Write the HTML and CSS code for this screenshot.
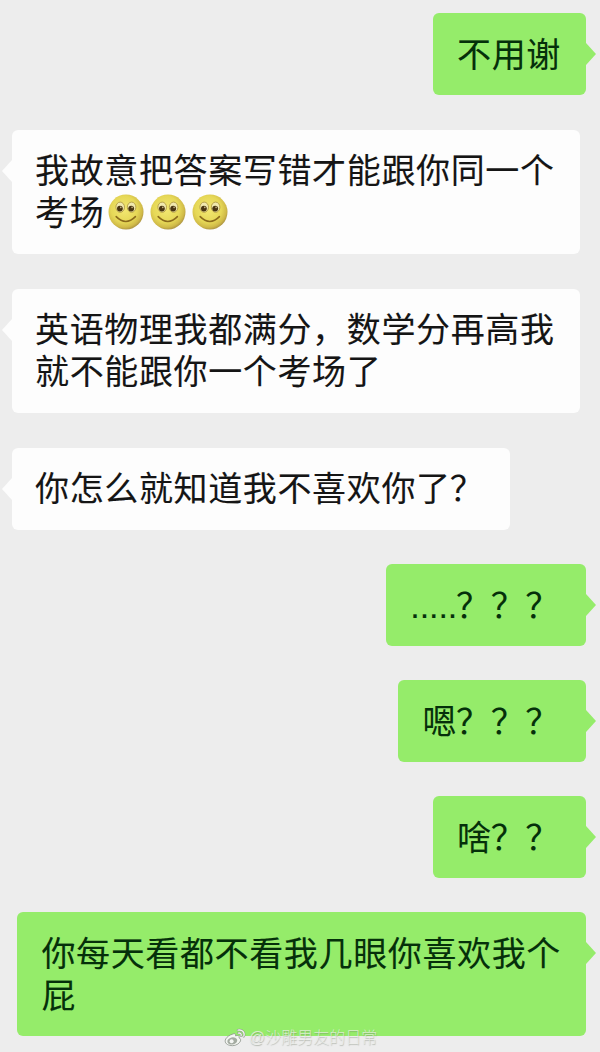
FILE: index.html
```html
<!DOCTYPE html>
<html lang="zh-CN">
<head>
<meta charset="utf-8">
<title>聊天</title>
<link rel="stylesheet" href="styles.css">
</head>
<body>
<svg class="defs" width="0" height="0" aria-hidden="true">
  <defs>
    <radialGradient id="face" cx="45%" cy="42%" r="60%">
      <stop offset="0" stop-color="#f3e873"/>
      <stop offset="0.62" stop-color="#e6d857"/>
      <stop offset="0.86" stop-color="#d0ba48"/>
      <stop offset="1" stop-color="#a88f42"/>
    </radialGradient>
    <symbol id="smile" viewBox="0 0 36 36">
      <circle cx="18" cy="18" r="17.5" fill="url(#face)"/>
      <ellipse cx="12.2" cy="13.2" rx="4.3" ry="5.1" fill="#f1e9ae" stroke="#b09a40" stroke-width="0.9"/>
      <ellipse cx="23.6" cy="13.2" rx="4.3" ry="5.1" fill="#f1e9ae" stroke="#b09a40" stroke-width="0.9"/>
      <circle cx="11.9" cy="14.6" r="2.9" fill="#493512"/>
      <circle cx="23.2" cy="14.6" r="2.9" fill="#493512"/>
      <circle cx="12.8" cy="13.4" r="0.8" fill="#c9b98a"/>
      <circle cx="24.1" cy="13.4" r="0.8" fill="#c9b98a"/>
      <path d="M8.2 22.6Q17.8 32.4 27.4 22.6" fill="none" stroke="#8a6a1c" stroke-width="1.6" stroke-linecap="round"/>
    </symbol>
  </defs>
</svg>
<main class="chat">
  <div class="bubble sent">不用谢</div>
  <div class="bubble received">我故意把答案写错才能跟你同一个<br>考场<span class="faces"><svg class="face"><use href="#smile"/></svg><svg class="face"><use href="#smile"/></svg><svg class="face"><use href="#smile"/></svg></span></div>
  <div class="bubble received">英语物理我都满分，数学分再高我<br>就不能跟你一个考场了</div>
  <div class="bubble received">你怎么就知道我不喜欢你了<span class="mark">？</span></div>
  <div class="bubble sent"><span class="dots">.....</span><span class="mark">？？？</span></div>
  <div class="bubble sent">嗯<span class="mark">？？？</span></div>
  <div class="bubble sent">啥<span class="mark">？？</span></div>
  <div class="bubble sent">你每天看都不看我几眼你喜欢我个<br>屁</div>
  <div class="watermark">
    <svg class="weibo" viewBox="0 0 22 20">
      <path d="M8.5 6.2C10.6 5 12 5.7 11.5 7.8C14 7 15.8 7.7 15 9.8C17 10.6 17.1 12.5 15.8 14.2C13.8 17 9.5 18.3 5.8 17.4C2 16.5.2 14 1.7 11C3 8.7 5.6 7 8.5 6.2Z" fill="#f4f6f2" stroke="#8c938a" stroke-width=".8"/>
      <ellipse cx="8.3" cy="12.9" rx="5" ry="3.6" transform="rotate(-12 8.3 12.9)" fill="#a5aca2"/>
      <circle cx="7.6" cy="13.3" r="2" fill="#f5f6f4"/>
      <path d="M14 2.2C18.2 1.2 21.2 4.5 19.8 8.3M14.4 5.1C16.4 4.7 17.7 6.1 17.1 7.9" fill="none" stroke="#8c938a" stroke-width="2.3" stroke-linecap="round"/>
      <path d="M14 2.2C18.2 1.2 21.2 4.5 19.8 8.3M14.4 5.1C16.4 4.7 17.7 6.1 17.1 7.9" fill="none" stroke="#f4f6f2" stroke-width="1.3" stroke-linecap="round"/>
    </svg>
    <span>@沙雕男友的日常</span>
  </div>
</main>
</body>
</html>
```
FILE: styles.css
```css
body {
  margin: 0;
  background: #ededed;
  font-family: "Liberation Sans", "Noto Sans CJK SC", sans-serif;
}

.defs {
  position: absolute;
}

.chat {
  position: relative;
  box-sizing: border-box;
  height: 1052px;
  padding: 13px 14px 0 12px;
  display: flex;
  flex-direction: column;
  align-items: flex-start;
  gap: 34px;
  overflow: hidden;
}

.bubble {
  position: relative;
  padding: 20px 25px 20px 23px;
  border-radius: 6px;
  font-size: 34px;
  line-height: 42px;
  letter-spacing: 0.64px;
  white-space: nowrap;
  -webkit-text-stroke: 0.1px currentColor;
}

.sent {
  align-self: flex-end;
  padding: 21px 25px 19px 24px;
  background: #95ec6a;
  color: #05300a;
}

.received {
  margin-top: 1px;
  background: #fdfdfd;
  color: #151515;
}

.bubble::after {
  content: "";
  position: absolute;
  top: 30px;
  width: 10px;
  height: 22px;
}

.sent::after {
  left: 100%;
  background: #95ec6a;
  clip-path: polygon(0 0, 100% 50%, 0 100%);
}

.received::after {
  right: 100%;
  background: #fdfdfd;
  clip-path: polygon(100% 0, 0 50%, 100% 100%);
}

.dots {
  letter-spacing: -0.1px;
}

.mark {
  position: relative;
  left: -1px;
}

.faces {
  display: inline-flex;
  gap: 6px;
  margin-left: 4px;
  vertical-align: -5px;
  height: 36px;
}

.face {
  width: 36px;
  height: 36px;
}

.watermark {
  position: absolute;
  left: 224px;
  top: 1026px;
  display: flex;
  align-items: center;
  gap: 3px;
  color: rgba(240, 242, 238, 0.75);
  font-size: 16px;
  font-weight: 300;
  line-height: 24px;
  white-space: nowrap;
  text-shadow: 0.5px 0.5px 1px rgba(110, 120, 105, 0.45);
}

.weibo {
  width: 22px;
  height: 20px;
}
```
